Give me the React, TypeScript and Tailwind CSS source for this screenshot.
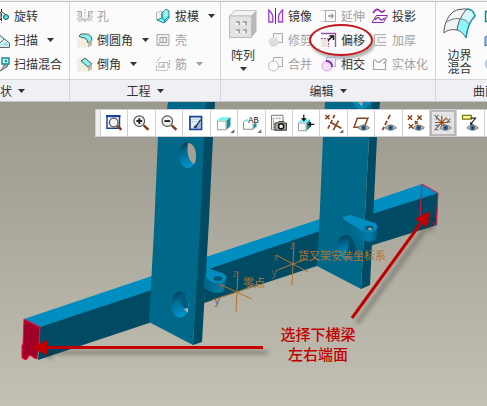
import React from "react";

interface ChildrenProps {
  children?: React.ReactNode;
}

interface CommandProps {
  label: string;
  icon: React.ReactNode;
  menu?: boolean;
  disabled?: boolean;
  circled?: boolean;
}

const Icon = ({ children }: ChildrenProps) => (
  <svg viewBox="0 0 16 16" className="size-4 shrink-0" fill="none" aria-hidden="true">
    {children}
  </svg>
);

const Caret = () => (
  <svg viewBox="0 0 7 4" className="h-1 w-[7px] shrink-0 fill-current" aria-hidden="true">
    <path d="M0 0h7L3.5 4z" />
  </svg>
);

/* Small ribbon command: icon, caption and an optional menu arrow */
function Command({ label, icon, menu, disabled, circled }: CommandProps) {
  return (
    <button
      type="button"
      disabled={disabled}
      className="relative flex h-6 items-center gap-1 whitespace-nowrap text-[#333] disabled:text-[#a2a2a2]"
    >
      {icon}
      <span>{label}</span>
      {menu && (
        <span className="ml-[5px]">
          <Caret />
        </span>
      )}
      {circled && (
        <span className="pointer-events-none absolute -top-1 -right-2 -bottom-1 -left-3 rounded-[50%] border-2 border-[#c4151a] shadow-[2px_3px_3px_rgba(0,0,0,0.3)]" />
      )}
    </button>
  );
}

interface GroupProps {
  label: string;
  menu?: boolean;
  className?: string;
  labelClassName?: string;
  children: React.ReactNode;
}

function Group({ label, menu, className = "", labelClassName = "justify-center", children }: GroupProps) {
  return (
    <section className="flex shrink-0 flex-col border-r border-[#d3d4d8]">
      <div className={`flex pt-0.5 pb-[3px] ${className}`}>{children}</div>
      <button
        type="button"
        className={`flex h-[22px] items-center gap-1.5 border-t border-[#d3d4d8] bg-[#eff0f4] whitespace-nowrap ${labelClassName}`}
      >
        <span>{label}</span>
        {menu && <Caret />}
      </button>
    </section>
  );
}

/* Ribbon icons */
const RevolveIcon = (
  <Icon>
    <path d="M7.5 1v14" stroke="#222" strokeDasharray="3 1.5" />
    <path d="M3 4.5h4v7H3M8 4l4 3" stroke="#444" />
    <circle cx="12" cy="9" r="2.5" fill="#5fd6dc" stroke="#166" />
  </Icon>
);
const SweepIcon = (
  <Icon>
    <path d="M6 2l9.500 8v5H6z" fill="#d3f3f5" />
    <path d="M4 2l11.500 9v4.500H4M4 13l6-6" stroke="#666" />
    <path d="M8 13l4-3 3 4z" fill="#8fe3e8" />
  </Icon>
);
const BlendIcon = (
  <Icon>
    <path d="M4 15c3 0 5-3 6-6l5-3-2 5-7 4z" fill="#aaa" stroke="#777" />
    <path d="M8 2h7v6H8z" fill="#b9f7f7" stroke="#168a93" strokeWidth="1.4" />
    <path d="M11 4h2v2h-2z" fill="#168a93" />
  </Icon>
);
const HoleIcon = (
  <Icon>
    <path d="M.5 3.500h4v6l3.500 3 3.500-3v-6h4v10H.5z" fill="#ddd" />
    <path d="M0 3.500h4.500v6l3.500 3 3.500-3v-6H16" stroke="#aaa" />
    <path d="M0 8l4-4M0 12l4-4M2 14l4-3M12 8l4-4M11 13l5-5M8 1v13" stroke="#bbb" strokeDasharray="2 1" />
  </Icon>
);
const RoundIcon = (
  <Icon>
    <path d="M0 4l4-3 11 7v5l-4 2.500H0z" fill="#f0eedf" />
    <path d="M4 2h5c4 0 6 3 6 6.500l-4 2.500C10.500 7.500 8 5.500 5 5.500L2 4z" fill="#7ff3f3" stroke="#555" />
    <path d="M11 11v4.500l4-2.500V8z" fill="#bdb9a4" />
  </Icon>
);
const ChamferIcon = (
  <Icon>
    <path d="M0 4l4-3 11 7v5l-4 2.500H0z" fill="#f0eedf" />
    <path d="M8 2l7 6-4 3-7-6z" fill="#7ff3f3" stroke="#555" />
    <path d="M11 11v4.500l4-2.500V8z" fill="#bdb9a4" />
  </Icon>
);
const DraftIcon = (
  <Icon>
    <path d="M1.500 4.500L7 3v9H1.500z" fill="#f5f3e8" stroke="#bbb" />
    <path d="M7 5l4-4 3 2v7l-5 5-7-3 5-2z" fill="#7feef0" stroke="#238d96" />
    <path d="M7 5v5l3 2 4-4M10 12l-1 3" stroke="#238d96" />
    <path d="M11 2v6" stroke="#fff" />
  </Icon>
);
const ShellIcon = (
  <Icon>
    <path d="M2 2.500h12v11H2z" fill="#f1f1f1" stroke="#aaa" />
    <path d="M5 5.500h6.500v5H5zM5 10.500L3 13M8 6v4" stroke="#a0a0a0" />
  </Icon>
);
const RibIcon = (
  <Icon>
    <path d="M4 12l6-6v6z" fill="#ccc" />
    <path d="M1.500 9.500v5H12M5.500 1L1 7M14.500 4v7l-3 4" stroke="#a5a5a5" strokeDasharray="2 1" />
    <path d="M4 12V6.500h9v5" stroke="#b5b5b5" />
  </Icon>
);
const MirrorIcon = (
  <Icon>
    <path d="M7.500 0v16" stroke="#444" />
    <path
      d="M.8 2v12h4V9c0-3-2-5-4-7zM14.500 2v12h-4V9c0-3 2-5 4-7z"
      fill="#fbf3ff"
      stroke="#9a3fe0"
      strokeWidth="1.300"
    />
  </Icon>
);
const TrimIcon = (
  <Icon>
    <path d="M5.500 1.500h9v9h-9z" fill="#f4f4f4" stroke="#aaa" />
    <circle cx="5.500" cy="10" r="5" fill="#ddd" />
  </Icon>
);
const MergeIcon = (
  <Icon>
    <path d="M5.500 5V1.500h9v9H11" stroke="#aaa" />
    <circle cx="5.500" cy="10" r="5" stroke="#bbb" />
  </Icon>
);
const ExtendIcon = (
  <Icon>
    <path d="M0 2.500h5M0 13.500h5" stroke="#ccc" />
    <path d="M4.500 2.500h10v11h-10z" stroke="#aaa" />
    <path d="M7 8h5M10 5.500L12.500 8 10 10.500" stroke="#666" />
  </Icon>
);
const OffsetIcon = (
  <Icon>
    <path d="M0 6h7v9H0z" fill="#eee8dc" />
    <path d="M0 1.500h14.500V15" stroke="#9152a8" strokeWidth="1.300" />
    <path d="M0 6.500h7.500V15" stroke="#b44fb8" strokeDasharray="2 1" />
    <path d="M7 8.500l4.500-4M8.500 4h4v4" stroke="#111" strokeWidth="1.500" />
  </Icon>
);
const IntersectIcon = (
  <Icon>
    <path d="M5.500 1.500h9v9h-9z" fill="#e4e9f6" stroke="#a9b6d8" />
    <circle cx="6" cy="10" r="5" fill="#f3e2f7" stroke="#d3a5df" />
    <path d="M5 5c3.500 0 6 2 6 6" stroke="#8e24aa" strokeWidth="1.800" />
  </Icon>
);
const ProjectIcon = (
  <Icon>
    <path d="M1 5c3-5 5-4 7-2s3 1 5-1" stroke="#8e24aa" strokeWidth="1.600" />
    <path d="M4.500 7.500h11l-4 7H0z" stroke="#8e24aa" />
    <path d="M3 12c2-3 4-3 5-1s2 1 5-1" stroke="#8e24aa" strokeWidth="1.400" />
  </Icon>
);
const ThickenIcon = (
  <Icon>
    <path d="M14 2.500H2.500v11H14M14 5.500H6.500v5H14" fill="#f3f3f3" stroke="#b5b5b5" />
  </Icon>
);
const SolidifyIcon = (
  <Icon>
    <path d="M1.500 4.500v9h12v-7M1.500 4.500c2-2 3 2 5 2s4-4 6-4l2 2-3 3" stroke="#a5a5a5" strokeWidth="1.200" />
  </Icon>
);

const PatternIcon = () => (
  <svg viewBox="0 0 28 28" className="size-7" fill="none" aria-hidden="true">
    <path d="M.5 6l5-5.500h22l-5 5.500z" fill="#f2f2f2" stroke="#c4c4c4" />
    <path d="M22.500 6l5-5.500v21l-5 6z" fill="#b9b9bb" />
    <path d="M.5 6h22v21.500H.5z" fill="#e3e3e5" stroke="#bbb" />
    <path d="M7 11h4v4H7zM14 11h4v4h-4zM7 19h4v4H7zM14 19h4v4h-4z" fill="#a9a9ab" />
    <path d="M7 13h2v2H7zM14 13h2v2h-2zM7 21h2v2H7zM14 21h2v2h-2z" fill="#fff" />
  </svg>
);

const BoundaryIcon = () => (
  <svg viewBox="0 0 33 32" className="h-8 w-[33px]" fill="none" aria-hidden="true">
    <path d="M1 25C1 17 4 9 10 4c4-3 10-3 14-3-4 4-8 10-10 21-5-1-10 0-13 3z" fill="#f3f4f4" />
    <path d="M24 1c4 0 7 3 8 7-5 5-8 13-9 22-2-4-5-7-9-8 1-8 5-16 10-21z" fill="#d6fafb" />
    <path d="M18 11c4 0 7 3 9 6-2 4-3 8-4 13-2-4-5-7-9-8 1-4 2-8 4-11z" fill="#8ff5f8" />
    <path d="M14 22c-5-1-10 0-13 3C1 17 4 9 10 4c4-3 10-3 14-3" stroke="#555" />
    <path d="M24 1c-5 5-9 13-10 21" stroke="#555" />
    <path d="M24 1c4 0 7 3 8 7-5 5-8 13-9 22" stroke="#0a94a3" strokeWidth="1.400" />
    <path d="M14 22c4 1 7 4 9 8" stroke="#567" />
    <path d="M4 14c4-3 9-4 14-3 4 0 7 3 9 6" stroke="#678" />
  </svg>
);

/* View toolbar glyph parts, all drawn on the 27 unit button square */
const Eye = ({ x = 16 }: { x?: number }) => (
  <g>
    <path d={`M${x - 6} 18.500q6-6 12 0q-6 5-12 0z`} fill="#c3c0b0" stroke="#77766c" />
    <circle cx={x} cy="18.500" r="2.600" fill="#3d6795" />
    <circle cx={x} cy="18.500" r="1" fill="#152c48" />
  </g>
);
const Cross = ({ x, y, r = 2.2 }: { x: number; y: number; r?: number }) => (
  <path
    d={`M${x - r} ${y - r}l${2 * r} ${2 * r}M${x + r} ${y - r}l${-2 * r} ${2 * r}`}
    stroke="#8a431c"
    strokeWidth="1.500"
  />
);
const Corner = () => <path d="M24 20v4h-4z" fill="#666" />;
const Lens = ({ x, y, r }: { x: number; y: number; r: number }) => (
  <g>
    <path d={`M${x + r - 1} ${y + r - 1}L21 20.500`} stroke="#813e1f" strokeWidth="2.500" />
    <circle cx={x} cy={y} r={r} fill="#f4f4f2" stroke="#555" strokeWidth="1.300" />
  </g>
);

const viewTools = [
  {
    name: "重新调整",
    art: (
      <>
        <path d="M6 6h13v13H6z" fill="#fff" stroke="#16409a" strokeWidth="1.500" />
        <path d="M5 6.500h15" stroke="#16409a" strokeWidth="2" />
        <Lens x={13} y={13} r={4.5} />
      </>
    ),
  },
  {
    name: "放大",
    art: (
      <>
        <Lens x={11.5} y={11.5} r={5.5} />
        <path d="M8.500 11.500h6M11.500 8.500v6" stroke="#222" strokeWidth="2" />
      </>
    ),
  },
  {
    name: "缩小",
    art: (
      <>
        <Lens x={11.5} y={11.5} r={5.5} />
        <path d="M8.500 11.500h6" stroke="#222" strokeWidth="2" />
      </>
    ),
  },
  {
    name: "重画",
    art: (
      <>
        <path d="M7 7h12v13H7z" fill="#e6f0fc" stroke="#1b4599" strokeWidth="1.800" />
        <path d="M8 19c4-1 5-3 7-5l3-3v8z" fill="#9dbbe2" />
        <path d="M11 18l3-2 4-6M14 16l-1 3" stroke="#1e3559" strokeWidth="1.400" />
        <path d="M10 9.500h6M9 12h5" stroke="#90aacb" strokeDasharray="1 1" />
      </>
    ),
  },
  {
    name: "显示样式",
    art: (
      <>
        <path d="M6.500 11.500h9v9h-9z" fill="#fafafa" stroke="#999" />
        <path d="M6 11l4-3.500h10L16 11z" fill="#78eff3" />
        <path d="M16 11l4-3.500v9L16 20.500z" fill="#1b929b" />
        <Corner />
      </>
    ),
  },
  {
    name: "已保存方向",
    art: (
      <>
        <path d="M10 10.500H8l-2.500 2v7.500h10v-6" fill="#fff" stroke="#888" />
        <path d="M6 12l2.500-2H11v2z" fill="#78eff3" />
        <path d="M16 14h3v3l-3 3z" fill="#1b929b" />
        <text x="10.500" y="13" fontSize="9" fill="#111" className="font-['Liberation_Mono',monospace]">
          AB
        </text>
        <Corner />
      </>
    ),
  },
  {
    name: "视图管理器",
    art: (
      <>
        <path d="M5.500 5.500h12v15h-12z" fill="#fafafa" stroke="#777" />
        <path d="M7.500 8v12M10 8.500h5" stroke="#777" strokeDasharray="2 1" />
        <path d="M9 13.500h3l1-1.500h5l1 1.500h2V21H9z" fill="#aaa796" stroke="#333" />
        <circle cx="15.500" cy="17" r="2.700" fill="#eee" stroke="#111" strokeWidth="1.500" />
      </>
    ),
  },
  {
    name: "透视图",
    art: (
      <>
        <path d="M5.500 13.500h8v8h-8z" fill="#f5f7f7" stroke="#999" />
        <path d="M5 13l4-3.500h9L14 13z" fill="#78eff3" />
        <path d="M14 13l3.500-3v8L14 21.500z" fill="#1b929b" />
        <path d="M11 5v6M22 15h-6" stroke="#111" strokeWidth="1.300" />
        <path d="M8 8.500h6L11 12zM18.500 12v6L15 15z" fill="#111" />
      </>
    ),
  },
  {
    name: "基准显示过滤器",
    art: (
      <>
        <Cross x={7.5} y={7.5} />
        <path d="M15 5L7.500 20.500" stroke="#8a431c" strokeWidth="1.700" strokeDasharray="4 2" />
        <path d="M11 13l11 6M19 11l-5.500 10" stroke="#8a431c" strokeWidth="1.700" />
        <Corner />
      </>
    ),
  },
  {
    name: "平面显示",
    art: (
      <>
        <path d="M9.500 8.500h11L16.500 18H6z" stroke="#8a431c" strokeWidth="1.500" />
        <Eye />
      </>
    ),
  },
  {
    name: "轴显示",
    art: (
      <>
        <path d="M15.500 5L7.500 21" stroke="#8a431c" strokeWidth="1.800" strokeDasharray="5 2" />
        <Eye />
      </>
    ),
  },
  {
    name: "点显示",
    art: (
      <>
        <Cross x={7} y={8} />
        <Cross x={17} y={8} />
        <Cross x={8} y={17} />
        <Cross x={13.5} y={13} r={1.5} />
        <Eye />
      </>
    ),
  },
  {
    name: "坐标系显示",
    pressed: true,
    art: (
      <>
        <path d="M12 6v14M5 13h14M7 8l10 10M17 8L7 18" stroke="#9a4b22" strokeWidth="1.200" />
        <path
          d="M4.500 5l2 2.500L9 5M6.500 7.500V10M17 9l4 4M21 9l-4 4M5 16h4l-4 4.500h4"
          stroke="#777"
          strokeWidth="1.200"
        />
        <Eye />
      </>
    ),
  },
  {
    name: "注释显示",
    art: (
      <>
        <path d="M5.500 5.500h9v4h-9z" fill="#ffffa0" stroke="#77770e" strokeWidth="1.300" />
        <path d="M14 8.500h5L14 15" stroke="#222" strokeWidth="1.200" />
        <path d="M13.500 12v3.500H17z" fill="#222" />
        <Eye />
      </>
    ),
  },
];

function ViewToolbar() {
  return (
    <div
      role="toolbar"
      className="absolute top-[7px] right-0 left-[95px] flex h-7 border border-r-0 border-[#cfd0d3] bg-white"
    >
      <div className="w-[5px] shrink-0 border-r border-[#cfd0d3] bg-[#ededf0]" />
      {viewTools.map((tool) => (
        <button
          key={tool.name}
          type="button"
          aria-label={tool.name}
          aria-pressed={tool.pressed}
          className="flex min-w-0 flex-1 items-center justify-center border-r border-[#cfd0d3] aria-pressed:bg-[#e4e4e6] aria-pressed:shadow-[inset_0_0_0_2px_#b9b9bd]"
        >
          <svg viewBox="0 0 27 27" className="h-full w-full" fill="none" aria-hidden="true">
            {tool.art}
          </svg>
        </button>
      ))}
      <div className="w-0.5 shrink-0" />
    </div>
  );
}

/* Fork carriage model with its coordinate systems and the annotation arrows */
function ModelScene() {
  return (
    <svg
      viewBox="0 102 487 304"
      className="block h-auto w-full font-['Noto_Sans_CJK_SC',sans-serif]"
      role="img"
      aria-label="货叉架"
    >
      <defs>
        <linearGradient id="bore" x1="0" y1="0" x2="0.3" y2="1">
          <stop offset="0" stopColor="#003347" />
          <stop offset="0.45" stopColor="#006a94" />
          <stop offset="1" stopColor="#0093c6" />
        </linearGradient>
        <linearGradient id="lug" x1="0" y1="0" x2="1" y2="0">
          <stop offset="0" stopColor="#00607f" />
          <stop offset="0.75" stopColor="#007dab" />
          <stop offset="1" stopColor="#005f80" />
        </linearGradient>
        <filter id="soft" x="-20%" y="-20%" width="140%" height="140%">
          <feGaussianBlur stdDeviation="2" />
        </filter>
      </defs>

      {/* Lower cross beam */}
      <path d="M24 319L152 276V291L40 327z" fill="#008dc0" />
      <path d="M40 327L152 290V322L38 360z" fill="#004b64" />
      <path d="M206 257L320 219V232L206 271z" fill="#008dc0" />
      <path d="M206 270L320 231V265L204 303z" fill="#004b64" />
      <path d="M372 201L422 184L438 193L372 215z" fill="#008dc0" />
      <path d="M372 214L438 193L437 225L370 246z" fill="#004b64" />

      {/* Left upright */}
      <path d="M205 102H215L213 137L209 220L202 342L193 345z" fill="#004b64" />
      <path d="M168 102H206L204 137L200 230L193 345L149 322L154 230L158 137L167 109z" fill="#00698a" />
      <ellipse cx="187.500" cy="155" rx="8.500" ry="13" fill="url(#bore)" />
      <path d="M188 143c5 0 8 6 8 13 0 5-1 7-2 8-4-2-8-9-6-21z" fill="#a4a295" />
      <ellipse cx="180" cy="304.500" rx="9" ry="13" fill="url(#bore)" />
      <path d="M181 293c5 3 7 9 7 16l-4-1c-4-3-4-9-3-15z" fill="#005b7b" />
      <path d="M188 308v5l-4-4z" fill="#b6b3a7" />
      <path d="M182 333h1v1h-1zM190 336h1v1h-1z" fill="#003347" />

      {/* Right upright */}
      <path d="M371 102H380L377 137L374 201L370 285L361 289z" fill="#004b64" />
      <path d="M325 102H372L369 137L361 289L317 266L319 230L323 137z" fill="#00698a" />
      <path d="M352 102H372L364 109H358z" fill="#0087b5" />
      <path d="M358 102H363L362 107z" fill="#a4a295" />
      <ellipse cx="346.500" cy="247" rx="9.500" ry="12" fill="url(#bore)" />
      <path d="M348 236c5 3 8 8 8 14l-3 7-9-1c4-5 6-12 4-20z" fill="#004e69" />
      <path d="M349 275h1v1h-1zM357 279h1v1h-1z" fill="#003347" />

      {/* Lugs */}
      <path d="M206 268L203 287C209 292 218 295 224 291L227 277z" fill="url(#lug)" />
      <path d="M207 268L222 273C229 276 227 281 219 283C212 283 208 280 206 277z" fill="#008dc0" />
      <ellipse cx="218" cy="278.500" rx="4.500" ry="2.500" fill="#005977" />
      <path d="M343 218V230L363 240C369 243 376 241 376 238L378 227z" fill="url(#lug)" />
      <path d="M343 217L350 215L375 223C379 226 377 231 371 232C366 232 361 231 343 219z" fill="#008dc0" />
      <ellipse cx="369" cy="228" rx="4.500" ry="2.500" fill="#00607f" />
      <ellipse cx="370" cy="229" rx="2" ry="1.200" fill="#a4a295" />

      {/* Selected end faces */}
      <path
        d="M24 319L40 327L39 344L37 359L34 358L30 355L26 360L22 358V345L23 344z"
        fill="#a00027"
        stroke="#f50a3c"
      />
      <path d="M422 184L438 193L436 225L420 217z" fill="none" stroke="#f50a3c" />

      {/* Coordinate systems */}
      <g stroke="#b47431" fill="none">
        <path d="M238 272L237 292L236 312M219 284L252 299M212 300L237 292L258 284" />
        <path d="M294 242L293 264L292 285M276 255L308 272M275 271L293 264L307 259" />
      </g>
      <g fill="#66615b" fontSize="11" textAnchor="middle">
        <text x="235" y="277">z</text>
        <text x="220" y="289">x</text>
        <text x="217" y="304">y</text>
        <text x="292" y="249">z</text>
        <text x="276" y="261">x</text>
        <text x="274" y="276">y</text>
      </g>
      <g fill="#b47431" fontSize="11">
        <text x="243" y="287">零点</text>
        <text x="298" y="260">货叉架安装坐标系</text>
      </g>

      {/* Arrows */}
      <g filter="url(#soft)" opacity="0.35" transform="translate(5 5)">
        <path d="M46 347.500H263M352 318L421 223" stroke="#222" strokeWidth="4" />
        <path d="M32 347.500L47 340V355zM430 211L415 219L427 227z" fill="#222" />
      </g>
      <path d="M46 347.500H263M352 318L421 223" stroke="#c30000" strokeWidth="3" />
      <path d="M32 347.500L47 340V355zM430 211L415 219L427 227z" fill="#c30000" />

      <g fill="#c30000" fontSize="15" fontWeight="500" textAnchor="middle">
        <text x="318" y="340">选择下横梁</text>
        <text x="318" y="360">左右端面</text>
      </g>
    </svg>
  );
}

export default function App() {
  return (
    <main className="w-full overflow-hidden bg-[#c2bfb3] font-['Noto_Sans_CJK_SC',sans-serif] text-xs leading-3 text-[#333]">
      <header className="border-b border-[#c6c7ca] bg-[#fbfbfc]">
        <div className="h-0.5 border-b border-[#b9c6c9] bg-[#f1f1f3]" />
        <div className="flex">
          <Group label="形状" menu className="pr-[7px]" labelClassName="-ml-3 justify-end pr-11">
            <div className="-ml-1.5 flex flex-col">
              <Command label="旋转" icon={RevolveIcon} />
              <Command label="扫描" icon={SweepIcon} menu />
              <Command label="扫描混合" icon={BlendIcon} />
            </div>
          </Group>

          <Group label="工程" menu className="gap-1.5 pr-[5px] pl-[7px]">
            <div className="flex flex-col">
              <Command label="孔" icon={HoleIcon} disabled />
              <Command label="倒圆角" icon={RoundIcon} menu />
              <Command label="倒角" icon={ChamferIcon} menu />
            </div>
            <div className="flex flex-col">
              <Command label="拔模" icon={DraftIcon} menu />
              <Command label="壳" icon={ShellIcon} disabled />
              <Command label="筋" icon={RibIcon} menu disabled />
            </div>
          </Group>

          <Group label="编辑" menu className="gap-[7px] pr-[7px] pl-2">
            <button type="button" className="mr-1 flex flex-col items-center pt-1.5">
              <PatternIcon />
              <span className="mt-[11px] mb-1.5">阵列</span>
              <Caret />
            </button>
            <div className="mr-0.5 flex flex-col">
              <Command label="镜像" icon={MirrorIcon} />
              <Command label="修剪" icon={TrimIcon} disabled />
              <Command label="合并" icon={MergeIcon} disabled />
            </div>
            <div className="flex flex-col">
              <Command label="延伸" icon={ExtendIcon} disabled />
              <Command label="偏移" icon={OffsetIcon} circled />
              <Command label="相交" icon={IntersectIcon} />
            </div>
            <div className="flex flex-col">
              <Command label="投影" icon={ProjectIcon} />
              <Command label="加厚" icon={ThickenIcon} disabled />
              <Command label="实体化" icon={SolidifyIcon} disabled />
            </div>
          </Group>

          <section className="flex min-w-0 flex-1 flex-col overflow-hidden">
            <div className="flex flex-1 gap-2 pt-0.5 pl-[7px]">
              <button type="button" className="flex shrink-0 flex-col items-center pt-1 leading-[13px]">
                <BoundaryIcon />
                <span className="mt-2">边界</span>
                <span>混合</span>
              </button>
              <div className="flex flex-col">
                <button type="button" aria-label="填充" className="flex h-6 items-center">
                  <Icon>
                    <path d="M1.500 3.500h13v10h-13z" fill="#c8f7f7" stroke="#0b8a82" strokeWidth="1.400" />
                  </Icon>
                </button>
                <button type="button" aria-label="样式" className="flex h-6 items-center">
                  <Icon>
                    <path d="M1 5l6-3v9l-6 3zM7 2l8 4v9l-8-4" fill="#9fc4e8" stroke="#3b6ea8" />
                  </Icon>
                </button>
                <button type="button" aria-label="自由式" className="flex h-6 items-center">
                  <Icon>
                    <circle cx="8" cy="8" r="6.500" fill="#cfe6fb" stroke="#8fb5da" />
                  </Icon>
                </button>
              </div>
            </div>
            <button
              type="button"
              className="flex h-[22px] items-center border-t border-[#d3d4d8] bg-[#eff0f4] pl-[37px] whitespace-nowrap"
            >
              曲面
            </button>
          </section>
        </div>
      </header>

      <div className="relative bg-linear-to-b from-[#9b998d] to-[#c2bfb3]">
        <ModelScene />
        <ViewToolbar />
      </div>
    </main>
  );
}
